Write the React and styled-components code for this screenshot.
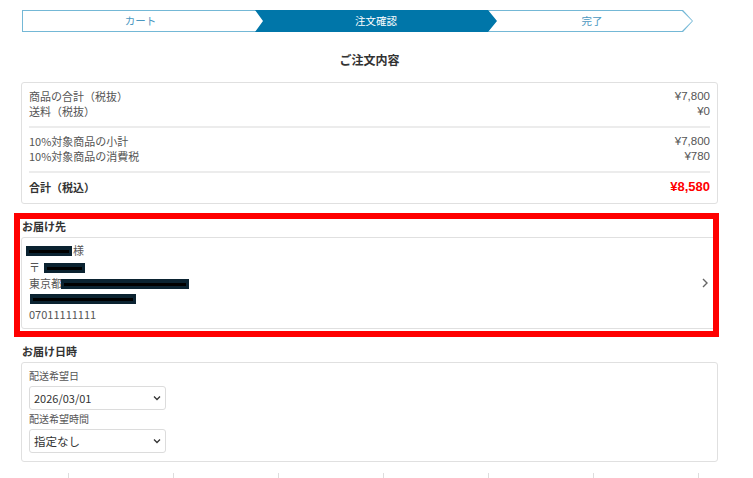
import React from "react";
import styled, { createGlobalStyle } from "styled-components";

const GlobalStyle = createGlobalStyle`
  body {
    margin: 0;
    background: #fff;
    font-family: "Noto Sans CJK JP", "Noto Sans", sans-serif;
    color: #555;
  }
`;

const App = () => {
  return (
    <>
      <GlobalStyle />
      <StPage>
        <StStepper>
          <StStepFirst>カート</StStepFirst>
          <StStepActive>注文確認</StStepActive>
          <StStepLast>
            <div>完了</div>
          </StStepLast>
        </StStepper>

        <StTitle>ご注文内容</StTitle>

        <StCard>
          <StGroup>
            <StRow>
              <span>商品の合計（税抜）</span>
              <StPrice>¥7,800</StPrice>
            </StRow>
            <StRow>
              <span>送料（税抜）</span>
              <StPrice>¥0</StPrice>
            </StRow>
          </StGroup>
          <StGroup>
            <StRow>
              <span>10%対象商品の小計</span>
              <StPrice>¥7,800</StPrice>
            </StRow>
            <StRow>
              <span>10%対象商品の消費税</span>
              <StPrice>¥780</StPrice>
            </StRow>
          </StGroup>
          <StGroup $last>
            <StTotalRow>
              <span>合計（税込）</span>
              <StTotalPrice>¥8,580</StTotalPrice>
            </StTotalRow>
          </StGroup>
        </StCard>

        <StSection>
          <StHeading>お届け先</StHeading>
          <StAddressCard>
            <StAddressBody>
              <StLine>
                <StRedact $w={46} $shift={-3} />
                <span>様</span>
              </StLine>
              <StLine>
                <span>〒</span>
                <StRedact $w={41} $shift={4} />
              </StLine>
              <StAddress>
                <StLine $h={15}>
                  <span>東京都</span>
                  <StRedact $w={128} $shift={-1} />
                </StLine>
                <StLine $h={15}>
                  <StRedact $w={106} $shift={1} />
                </StLine>
              </StAddress>
              <StLine>07011111111</StLine>
            </StAddressBody>
            <svg width="8" height="12" viewBox="0 0 8 12">
              <polyline
                points="2,2 6,6 2,10"
                fill="none"
                stroke="#666"
                strokeWidth="1.4"
              />
            </svg>
          </StAddressCard>
          <StHighlight />
        </StSection>

        <StHeading>お届け日時</StHeading>
        <StDateCard>
          <StLabel>配送希望日</StLabel>
          <StSelect>
            <span>2026/03/01</span>
            <SelectArrow />
          </StSelect>
          <StLabel>配送希望時間</StLabel>
          <StSelect $big>
            <span>指定なし</span>
            <SelectArrow />
          </StSelect>
        </StDateCard>

        <StTicks>
          {Array.from({ length: 7 }).map((_, i) => (
            <StTick key={i} $last={i === 6} />
          ))}
        </StTicks>
      </StPage>
    </>
  );
};

const SelectArrow = () => (
  <svg width="8" height="6" viewBox="0 0 8 6">
    <polyline
      points="1,1.5 4,4.5 7,1.5"
      fill="none"
      stroke="#333"
      strokeWidth="1.3"
    />
  </svg>
);

export default App;

const StPage = styled.div`
  width: 697px;
  margin-left: 21px;
  padding-top: 10px;
`;

const StStepper = styled.div`
  display: flex;
  height: 22px;
  margin-left: 1px;
  font-size: 10.5px;
  line-height: 22px;
  color: #4b97bf;
`;

const StStepFirst = styled.div`
  box-sizing: border-box;
  width: 241px;
  flex-shrink: 0;
  padding-right: 5px;
  text-align: center;
  border: 1px solid #74b8d6;
  border-right: none;
  line-height: 20px;
  background: #fff;
`;

const StStepActive = styled.div`
  position: relative;
  z-index: 2;
  width: 242px;
  flex-shrink: 0;
  margin-left: -8px;
  text-align: center;
  color: #fff;
  background: #0076a9;
  clip-path: polygon(
    0 0,
    calc(100% - 9px) 0,
    100% 50%,
    calc(100% - 9px) 100%,
    0 100%,
    8px 50%
  );
`;

const StStepLast = styled.div`
  width: 205px;
  flex-shrink: 0;
  margin-left: -9px;
  padding: 1px 1px 1px 0;
  box-sizing: border-box;
  background: #74b8d6;
  clip-path: polygon(
    0 0,
    calc(100% - 10px) 0,
    100% 50%,
    calc(100% - 10px) 100%,
    0 100%
  );
  div {
    height: 20px;
    line-height: 20px;
    padding-left: 4px;
    text-align: center;
    background: #fff;
    clip-path: polygon(
      0 0,
      calc(100% - 10px) 0,
      100% 50%,
      calc(100% - 10px) 100%,
      0 100%
    );
  }
`;

const StTitle = styled.div`
  margin-top: 19px;
  text-align: center;
  font-size: 12px;
  font-weight: 700;
  line-height: 18px;
  color: #333;
`;

const StCard = styled.div`
  margin-top: 13px;
  padding: 0 7px;
  border: 1px solid #e0e0e0;
  border-radius: 3px;
`;

const StGroup = styled.div`
  padding: ${(p) => (p.$last ? "6px 0 8px" : "6px 0 7px")};
  border-bottom: ${(p) => (p.$last ? "none" : "2px solid #ececec")};
`;

const StRow = styled.div`
  display: flex;
  justify-content: space-between;
  align-items: center;
  height: 15px;
  font-size: 11px;
  line-height: 15px;
  color: #555;
`;

const StPrice = styled.span`
  font-family: "Liberation Sans", Arial, sans-serif;
  font-size: 11.5px;
`;

const StTotalRow = styled(StRow)`
  height: 16px;
  font-weight: 700;
  line-height: 16px;
  color: #333;
`;

const StTotalPrice = styled.span`
  font-family: "Liberation Sans", Arial, sans-serif;
  font-size: 13px;
  color: #f00;
`;

const StSection = styled.div`
  position: relative;
`;

const StHeading = styled.div`
  margin-top: 15px;
  margin-bottom: 4px;
  padding-left: 1px;
  font-size: 11px;
  font-weight: 700;
  line-height: 14px;
  color: #333;
`;

const StAddressCard = styled.div`
  display: flex;
  align-items: center;
  justify-content: space-between;
  padding: 4px 8px 5px 7px;
  border: 1px solid #e0e0e0;
  border-radius: 3px;
`;

const StAddressBody = styled.div`
  font-size: 11px;
  color: #555;
`;

const StLine = styled.div`
  display: flex;
  align-items: center;
  height: ${(p) => p.$h || 17}px;
  line-height: ${(p) => p.$h || 17}px;
`;

const StAddress = styled.div``;

const StRedact = styled.span`
  position: relative;
  display: inline-block;
  width: ${(p) => p.$w}px;
  height: 10px;
  margin-left: ${(p) => p.$shift}px;
  margin-right: 1px;
  background: #0b2331;
  &::after {
    content: "";
    position: absolute;
    left: 3px;
    right: 3px;
    top: 4px;
    height: 3px;
    background: #000;
  }
`;

const StHighlight = styled.div`
  position: absolute;
  top: -6px;
  left: -7px;
  right: -1px;
  bottom: -8px;
  border: 6px solid #f00;
  pointer-events: none;
`;

const StDateCard = styled.div`
  padding: 6px 7px 6px;
  border: 1px solid #e0e0e0;
  border-radius: 3px;
`;

const StLabel = styled.div`
  font-size: 10px;
  line-height: 14px;
  color: #555;
  & + div {
    margin-top: 3px;
  }
`;

const StSelect = styled.div`
  box-sizing: border-box;
  display: flex;
  align-items: center;
  justify-content: space-between;
  width: 137px;
  height: 24px;
  margin-bottom: 2px;
  padding: 0 4px 0 4px;
  border: 1px solid #dcdcdc;
  border-radius: 3px;
  font-size: ${(p) => (p.$big ? "11.5px" : "11px")};
  color: #333;
`;

const StTicks = styled.div`
  display: flex;
  margin-top: 11px;
  margin-left: 47px;
`;

const StTick = styled.div`
  width: ${(p) => (p.$last ? 1 : 104)}px;
  height: 10px;
  flex-shrink: 0;
  border-left: 1px solid #ddd;
`;
